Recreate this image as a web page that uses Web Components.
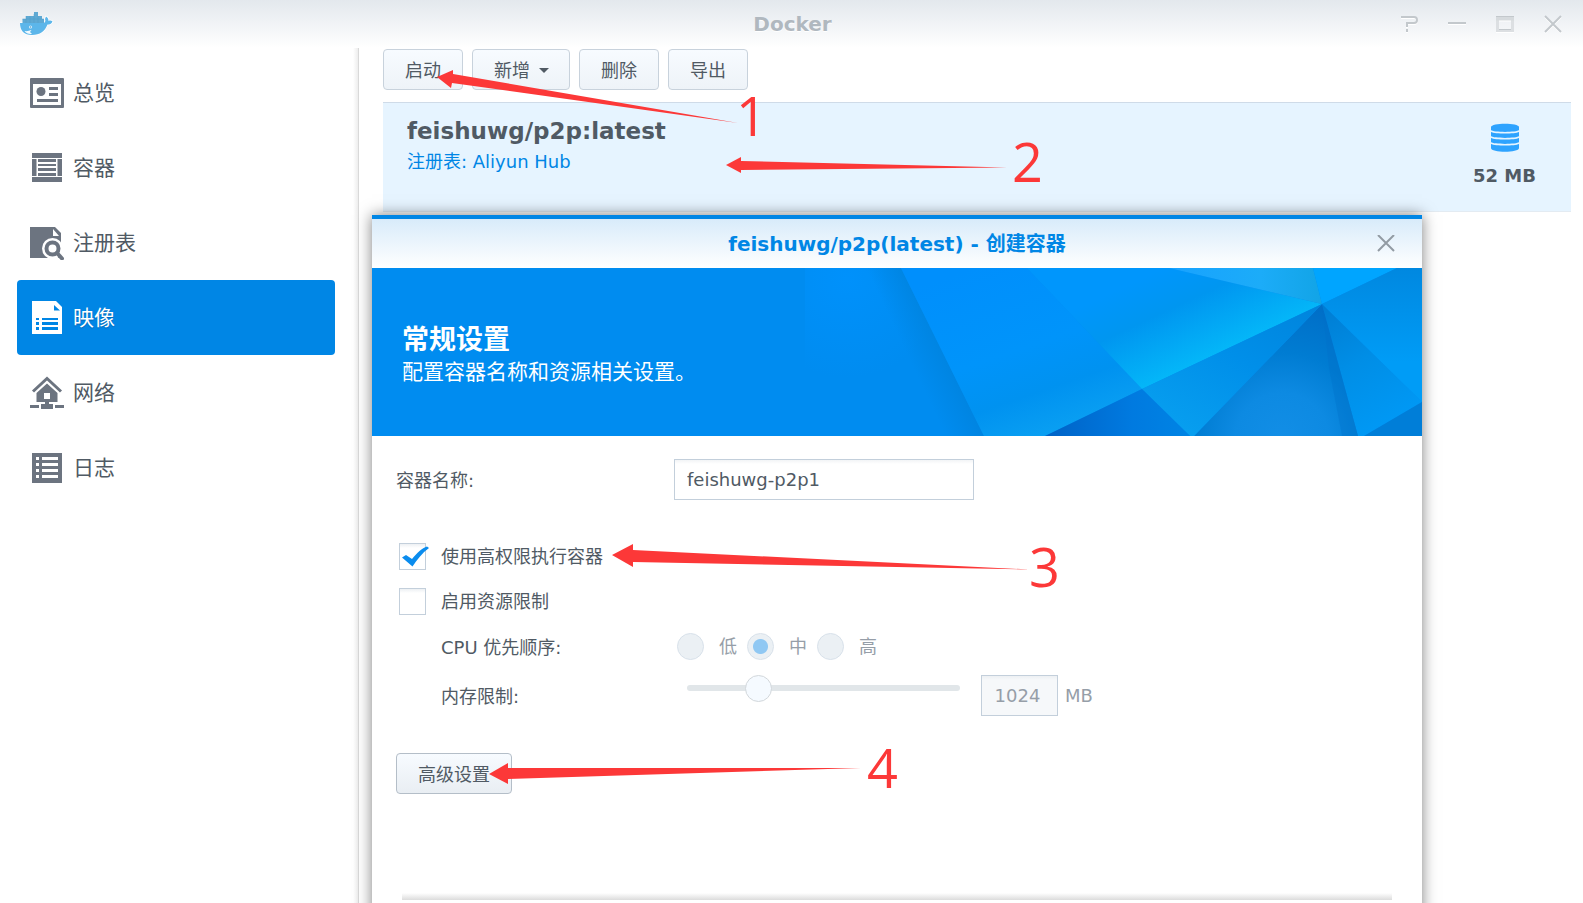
<!DOCTYPE html>
<html lang="zh-CN">
<head>
<meta charset="utf-8">
<title>Docker</title>
<style>
  body {
    margin: 0;
    overflow: hidden;
    background: #fff;
    color: #505a64;
    font: 18px/24px "DejaVu Sans", "Noto Sans CJK SC", sans-serif;
  }
</style>
</head>
<body>
<docker-app></docker-app>

<script>
const define = (name, html, setup) => {
  const template = document.createElement('template');
  template.innerHTML = html;

  customElements.define(name, class extends HTMLElement {
    constructor() {
      super();
      this.attachShadow({mode: 'open'});
      this.shadowRoot.appendChild(template.content.cloneNode(true));
    }

    connectedCallback() {
      if (setup) setup(this, this.shadowRoot);
    }
  });
};

define('title-bar', `
  <style>
    :host { display: grid; grid-template-columns: 1fr auto 1fr; align-items: center; height: 48px; padding: 0 18px 0 20px; background: linear-gradient(#e3e8ed, #fff); }
    h1 { margin: 0; font-size: 20px; line-height: 24px; color: #b0b8bf; text-shadow: 0 1px #fff; }
    .logo { display: block; width: 34px; height: 26px; }
    .tools { display: flex; gap: 24px; justify-content: flex-end; }
    button { width: 24px; height: 24px; padding: 0; border: 0; background: none; display: grid; place-items: center; }
    button svg { fill: none; stroke: #c3c8cc; stroke-width: 2; filter: drop-shadow(0 1px #fff); }
  </style>
  <svg class="logo" viewBox="0 0 34 26" aria-hidden="true">
    <path d="M0 12H23c2 0 3-2 2-4l1-2.500c2 1 2.500 3 2.500 4.500 1.500-.8 3-.5 4 .5-1 2.500-3 3-5 3C25 20 20 24 12 24 4 24 0 20 0 12z" fill="#5cb6ea" stroke="#fff" stroke-width="1.500" paint-order="stroke"/>
    <path d="M2.500 8H6V5h8V1h4v4h4v3h2v4H2.500z" fill="#5fa9d3"/>
    <path d="M6 5v7M10 5v7M14 3v9M18 5v7M2.500 8H24" stroke="#4f9dca" stroke-width=".5" fill="none"/>
    <circle cx="10.500" cy="16" r="1.500" fill="#dff1fc"/><circle cx="10.500" cy="16" r=".7" fill="#5b9cc0"/>
    <path d="M4.500 20c3 .5 5-.5 7-1l-1.500 2 2 2C8.500 23.500 6 22 4.500 20z" fill="#f2fafe"/>
  </svg>
  <h1><slot></slot></h1>
  <div class="tools">
    <button aria-label="Help"><svg width="18" height="18"><path d="M1 2H14q3 0 3 3t-3 3H7v4M7 14v3"/></svg></button>
    <button aria-label="Minimize"><svg width="18" height="18"><path d="M0 8H18"/></svg></button>
    <button aria-label="Maximize"><svg width="18" height="18"><path d="M1.500 4V15.500H16.500V4" stroke-width="3" stroke="#dcdfe2"/><path d="M0 3.500H18" stroke-width="4" stroke="#d6dadd"/><path d="M0 1.500H18M3 14.500H15" stroke-width="1"/></svg></button>
    <button aria-label="Close"><svg width="18" height="18"><path d="M1 1L17 17M17 1L1 17"/></svg></button>
  </div>
`);

define('nav-item', `
  <style>
    :host { display: block; }
    a { display: flex; align-items: center; gap: 9px; height: 75px; padding-left: 13px; border-radius: 4px; color: #505a64; font-size: 21px; text-decoration: none; --icon: #6c7480; --hole: #fff; }
    :host([selected]) a { background: #0086e5; color: #fff; text-shadow: 0 1px 1px #0064b4; --icon: #fff; --hole: #0086e5; }
    ::slotted(svg) { width: 34px; height: 34px; flex: none; }
  </style>
  <a href="#"><slot name="icon"></slot><slot></slot></a>
`);

define('side-bar', `
  <style>
    :host { display: block; box-sizing: border-box; width: 359px; padding: 7px 24px 0 17px; background: linear-gradient(to left, #d9d9d9 1px, #ededed 1px, #fff 6px); }
    svg { fill: var(--icon); }
    .hole { fill: var(--hole); }
    nav { display: block; }
  </style>
  <nav>
    <nav-item><svg slot="icon" viewBox="0 0 34 34">
      <rect y="2" width="34" height="30" rx="1"/><rect class="hole" x="3" y="8" width="28" height="21"/>
      <circle cx="11" cy="15.500" r="4.500"/><path d="M19 11h9v3h-9zM19 17h9v3h-9zM7 23h21v3H7z"/></svg>总览</nav-item>
    <nav-item><svg slot="icon" viewBox="0 0 34 34">
      <path d="M2 2h30v5H2zM2 26h30v5H2zM2 8h4.500v17H2zM27.500 8H32v17h-4.500zM8 8h18v3H8zM8 13h18v2H8zM8 17h18v3H8zM8 22h18v3H8z"/></svg>容器</nav-item>
    <nav-item><svg slot="icon" viewBox="0 0 34 34">
      <path d="M0 1H25L31 7V32H0z"/><path class="hole" d="M23 3v7h6z"/>
      <circle class="hole" cx="22.500" cy="22.500" r="10.500"/><path class="hole" d="M24 28L31 34H20z"/>
      <circle cx="22.500" cy="22.500" r="6" fill="none" stroke="#6c7480" stroke-width="4"/>
      <path d="M27 27L32 32.500" stroke="#6c7480" stroke-width="4" stroke-linecap="round"/></svg>注册表</nav-item>
    <nav-item selected><svg slot="icon" viewBox="0 0 34 34">
      <path d="M2 0H26L32 6V33H2z"/>
      <path class="hole" d="M24 4v5.500h6zM6 17h3v2H6zM6 21h3v3H6zM6 26h3v3H6zM12 17h16v2H12zM12 21h16v3H12zM12 26h16v3H12z"/></svg>映像</nav-item>
    <nav-item><svg slot="icon" viewBox="0 0 34 34">
      <path d="M3 15.500L17 2.500 31 15.500" fill="none" stroke="#6c7480" stroke-width="3"/>
      <path d="M17 7.500L27.500 17V26H19v2h4v5H11V28h4V26H6.500V17zM0 29h9v3H0zM25 29h9v3h-9z"/>
      <path class="hole" d="M14 17h6v6h-6z"/></svg>网络</nav-item>
    <nav-item><svg slot="icon" viewBox="0 0 34 34">
      <path d="M2 2h30v30H2z"/>
      <path class="hole" d="M6 6h3v3H6zM6 12h3v3H6zM6 18h3v3H6zM6 24h3v3H6zM12 6h16v3H12zM12 12h16v3H12zM12 18h16v3H12zM12 24h16v3H12z"/></svg>日志</nav-item>
  </nav>
`);

define('ui-button', `
  <style>
    :host { display: inline-block; }
    button { display: flex; align-items: center; gap: 9px; height: 41px; padding: 2px 21px 0; border: 1px solid #c8d2dc; border-radius: 4px; background: linear-gradient(#f7fbff, #eef3f8); color: #505a64; font: inherit; }
    :host([strong]) button { border-color: #b4bec8; background: linear-gradient(#f7fbff, #e9eef3); }
    i { display: none; border: 5px solid transparent; border-top-color: #505a64; border-bottom: 0; }
    :host([menu]) i { display: block; }
    :host([menu]) button { padding-right: 20px; }
  </style>
  <button type="button"><slot></slot><i></i></button>
`);

define('image-row', `
  <style>
    :host { display: flex; justify-content: space-between; box-sizing: border-box; height: 110px; padding: 14px 35px 0 24px; border: solid #cfdbe8; border-width: 1px 0; border-bottom-color: #e3ebf2; background: #e6f4ff; }
    h2 { margin: 0; font-size: 23px; line-height: 28px; }
    p { margin: 5px 0 0; color: #0086e5; }
    .size { display: grid; justify-items: center; align-content: start; gap: 11px; padding-top: 6px; font-weight: bold; }
  </style>
  <div>
    <h2><slot name="name"></slot></h2>
    <p><slot name="registry"></slot></p>
  </div>
  <div class="size">
    <svg width="28" height="30" fill="#2ea3ff" aria-hidden="true">
      <path d="M0 4C0-.5 28-.5 28 4V7C26 9.500 2 9.500 0 7z"/>
      <path d="M0 9C4 11 24 11 28 9V13C26 15.500 2 15.500 0 13z"/>
      <path d="M0 15C4 17 24 17 28 15V19C26 21.500 2 21.500 0 19z"/>
      <path d="M0 21C4 23 24 23 28 21V25C28 30 0 30 0 25z"/>
    </svg>
    <slot name="size"></slot>
  </div>
`);

define('text-field', `
  <style>
    :host { display: grid; grid-template-columns: 278px 300px; align-items: center; }
    label { padding-top: 2px; }
    input { box-sizing: border-box; width: 100%; height: 41px; padding: 0 12px; border: 1px solid #c3cfdb; background: linear-gradient(#f2f4f6, #fff 4px); color: #505a64; font: inherit; }
  </style>
  <label for="field"><slot></slot></label>
  <input id="field" type="text">
`, (host, root) => {
  root.querySelector('input').value = host.getAttribute('value');
});

define('check-field', `
  <style>
    :host { display: block; }
    label { display: flex; align-items: center; gap: 15px; height: 45px; padding-left: 3px; }
    .box { display: grid; }
    input, svg { grid-area: 1 / 1; box-sizing: border-box; width: 27px; height: 27px; margin: 0; }
    input { appearance: none; border: 1px solid #c3cfdb; background: linear-gradient(#edf0f3, #fff 4px); }
    svg { overflow: visible; visibility: hidden; pointer-events: none; fill: #0a8cee; }
    input:checked + svg { visibility: visible; }
  </style>
  <label>
    <span class="box"><input type="checkbox"><svg viewBox="0 0 27 27"><path d="M3 14.500L7 12 13 16C18 10 23 5 28 3.500L30 5C23 10 18 17 13.500 23.500z"/></svg></span>
    <slot></slot>
  </label>
`, (host, root) => {
  root.querySelector('input').checked = host.hasAttribute('checked');
});

define('priority-field', `
  <style>
    :host { display: block; }
    fieldset { display: flex; align-items: center; height: 45px; margin: 0; padding: 0; border: 0; }
    .name { width: 236px; padding-top: 2px; }
    label { display: flex; align-items: center; width: 70px; gap: 15px; color: #969ea8; }
    input { appearance: none; box-sizing: border-box; flex: none; width: 27px; height: 27px; margin: 0; border: 1px solid #d8e1ea; border-radius: 50%; background: #ebf0f4; }
    input:checked { background: radial-gradient(circle, #90c8f3 7px, #ebf0f4 8px); }
  </style>
  <fieldset disabled aria-labelledby="name">
    <span class="name" id="name"><slot></slot></span>
    <label><input type="radio" name="priority">低</label>
    <label><input type="radio" name="priority" checked>中</label>
    <label><input type="radio" name="priority">高</label>
  </fieldset>
`);

define('memory-field', `
  <style>
    :host { display: flex; align-items: center; height: 41px; margin-top: 6px; color: #969ea8; }
    label { width: 246px; padding-top: 2px; color: #505a64; }
    input { box-sizing: border-box; margin: 0; font: inherit; }
    .range { appearance: none; align-self: flex-start; width: 273px; height: 26px; margin-right: 21px; background: none; }
    .range::-webkit-slider-runnable-track { height: 6px; border-radius: 3px; background: #e1e6e9; }
    .range::-webkit-slider-thumb { appearance: none; box-sizing: border-box; width: 27px; height: 27px; margin-top: -10px; border: 1px solid #d2d7db; border-radius: 50%; background: #f5faff; }
    .amount { width: 77px; height: 41px; margin-right: 7px; padding: 0 4px 0 0; border: 1px solid #c3cfdb; background: linear-gradient(#edf0f3, #f6f8fa 4px); color: #969ea8; text-align: center; }
  </style>
  <label for="amount"><slot></slot></label>
  <input class="range" type="range" min="0" max="1000" value="236" disabled aria-label="内存限制">
  <input class="amount" id="amount" type="text" value="1024" disabled>
  <span>MB</span>
`);

define('wizard-banner', `
  <style>
    :host { display: grid; grid-template-columns: 100%; height: 168px; overflow: hidden; background: #008cf0; color: #fff; }
    .art, .copy { grid-area: 1 / 1; }
    .art { justify-self: end; }
    .copy { align-self: center; padding: 4px 30px 0; }
    h3 { margin: 0; font-size: 27px; line-height: 36px; }
    p { margin: 0; font-size: 21px; line-height: 28px; }
  </style>
  <svg class="art" width="625" height="168" viewBox="425 0 625 168" aria-hidden="true">
    <defs>
      <radialGradient id="a" gradientUnits="userSpaceOnUse" cx="475" cy="10" r="100" gradientTransform="translate(0 0) scale(1 1)"><stop offset="0" stop-color="#0091fb"/><stop offset="1" stop-color="#008cf0"/></radialGradient>
      <linearGradient id="shade" gradientUnits="userSpaceOnUse" x1="540" y1="97" x2="574" y2="81"><stop offset="0" stop-color="#0084e0" stop-opacity="0"/><stop offset="1" stop-color="#0084e0"/></linearGradient>
      <linearGradient id="b" gradientUnits="userSpaceOnUse" x1="600" y1="0" x2="660" y2="175"><stop offset="0" stop-color="#008ffc"/><stop offset=".5" stop-color="#0094fa"/><stop offset=".75" stop-color="#0092f0"/><stop offset="1" stop-color="#0aa0f2"/></linearGradient>
      <linearGradient id="c" gradientUnits="userSpaceOnUse" x1="818" y1="-12" x2="860" y2="78"><stop offset="0" stop-color="#0096fc"/><stop offset=".4" stop-color="#0096f0"/><stop offset="1" stop-color="#04b6f8"/></linearGradient>
      <linearGradient id="d"><stop offset="0" stop-color="#18a2ff"/><stop offset=".6" stop-color="#1cacf8"/><stop offset="1" stop-color="#12a4e6"/></linearGradient>
      <linearGradient id="e" y2="1" x2="0"><stop offset="0" stop-color="#0088e0"/><stop offset=".7" stop-color="#009cf6"/></linearGradient>
      <linearGradient id="f" x2=".4" y2="1"><stop offset="0" stop-color="#007cd2"/><stop offset=".5" stop-color="#008ee6"/><stop offset="1" stop-color="#0098f4"/></linearGradient>
      <radialGradient id="g" gradientUnits="userSpaceOnUse" cx="910" cy="172" r="135"><stop offset="0" stop-color="#128ee6"/><stop offset=".35" stop-color="#0d8ae2"/><stop offset=".65" stop-color="#007cd2"/><stop offset="1" stop-color="#006fc8"/></radialGradient>
      <linearGradient id="h" x1="1" x2=".3" y2="1"><stop offset="0" stop-color="#0084dc"/><stop offset=".5" stop-color="#008fe9"/><stop offset="1" stop-color="#079eef"/></linearGradient>
      <linearGradient id="i"><stop offset="0" stop-color="#0062c6"/><stop offset=".6" stop-color="#007ae0"/><stop offset="1" stop-color="#0084e4"/></linearGradient>
    </defs>
    <path fill="url(#a)" d="M433 0H529L612 168H433z"/>
    <path fill="url(#shade)" d="M490 0H529L612 168H540z"/>
    <path fill="url(#b)" d="M529 0H655L770 121 673 168H612z"/>
    <path fill="url(#c)" d="M655 0H797L950 36 770 121z"/>
    <path fill="url(#d)" d="M797 0H941L950 36z"/>
    <path fill="#00a5ff" d="M941 0H1025L950 36z"/>
    <path fill="url(#e)" d="M1025 0H1050V134L950 36z"/>
    <path fill="url(#f)" d="M950 36L1050 134 992 168H986z"/>
    <path fill="url(#g)" d="M950 36L986 168H822z"/>
    <path fill="#0070c8" opacity=".35" d="M950 36L986 168H970L957 100z"/>
    <path fill="url(#h)" d="M950 36L770 121 818 168H822z"/>
    <path fill="url(#i)" d="M770 121L673 168H818z"/>
    <path fill="#007ed8" d="M1050 134V168H992z"/>
  </svg>
  <div class="copy">
    <h3><slot name="title"></slot></h3>
    <p><slot></slot></p>
  </div>
`);

define('wizard-dialog', `
  <style>
    :host { display: block; border-top: 4px solid #0086e5; background: #fff; box-shadow: 0 0 14px rgba(0, 0, 0, .5); }
    header { display: grid; grid-template-columns: 24px 1fr 24px; align-items: center; height: 49px; padding: 0 24px; background: linear-gradient(#d8ebfa, #fff); }
    h2 { grid-column: 2; margin: 0; font-size: 20px; line-height: 24px; text-align: center; color: #0086e5; }
    button { width: 24px; height: 24px; padding: 0; border: 0; background: none; display: grid; place-items: center; }
    form { padding: 23px 24px 0; }
    footer { height: 80px; margin: 99px 30px 0; background: linear-gradient(#fff, #dcdcdc) top / 100% 7px no-repeat; }
  </style>
  <header>
    <h2><slot name="title"></slot></h2>
    <button type="button" aria-label="Close"><svg width="18" height="18" stroke="#929ba3" stroke-width="2"><path d="M1 0L17 16M17 0L1 16"/></svg></button>
  </header>
  <slot name="banner"></slot>
  <form><slot></slot></form>
  <footer></footer>
`);

// red step numbers, each with an arrow to its control
define('step-marks', `
  <style>
    :host { display: block; pointer-events: none; }
    svg { display: block; fill: #fc3838; font: 500 54px "Open Sans", "Noto Sans", sans-serif; }
  </style>
  <svg width="1100" height="900">
    <path d="M437 77L453 70 453 74 738 123 452 83 451 88z"/>
    <path d="M726 165L741 157V161L1007 167.500 741 170V173z"/>
    <path d="M612 555L633 544V550L1030 569.500 633 562V567z"/>
    <path d="M489 774L508 763V768H861L508 779V784z"/>
    <text x="736" y="136">1</text>
    <text x="1012" y="182">2</text>
    <text x="1029" y="587">3</text>
    <text x="867" y="788">4</text>
  </svg>
`);

define('docker-app', `
  <style>
    :host { display: flex; flex-direction: column; position: relative; height: 100vh; overflow: hidden; }
    .main { display: flex; flex: 1; }
    .content { flex: 1; padding: 1px 12px 0 24px; }
    .toolbar { display: flex; gap: 9px; margin-bottom: 12px; }
    wizard-dialog { position: absolute; top: 215px; left: 372px; width: 1050px; }
    step-marks { position: absolute; top: 0; left: 0; }
    check-field.first { margin-top: 34px; }
    .indent { margin-left: 45px; }
    ui-button.advanced { margin-top: 37px; }
  </style>
  <title-bar>Docker</title-bar>
  <div class="main">
    <side-bar></side-bar>
    <div class="content">
      <div class="toolbar">
        <ui-button>启动</ui-button>
        <ui-button menu>新增</ui-button>
        <ui-button>删除</ui-button>
        <ui-button>导出</ui-button>
      </div>
      <image-row>
        <span slot="name">feishuwg/p2p:latest</span>
        <span slot="registry">注册表: Aliyun Hub</span>
        <span slot="size">52 MB</span>
      </image-row>
    </div>
  </div>
  <wizard-dialog role="dialog">
    <span slot="title">feishuwg/p2p(latest) - 创建容器</span>
    <wizard-banner slot="banner"><span slot="title">常规设置</span>配置容器名称和资源相关设置。</wizard-banner>
    <text-field value="feishuwg-p2p1">容器名称:</text-field>
    <check-field class="first" checked>使用高权限执行容器</check-field>
    <check-field>启用资源限制</check-field>
    <priority-field class="indent">CPU 优先顺序:</priority-field>
    <memory-field class="indent">内存限制:</memory-field>
    <ui-button class="advanced" strong>高级设置</ui-button>
  </wizard-dialog>
  <step-marks></step-marks>
`);
</script>
</body>
</html>
